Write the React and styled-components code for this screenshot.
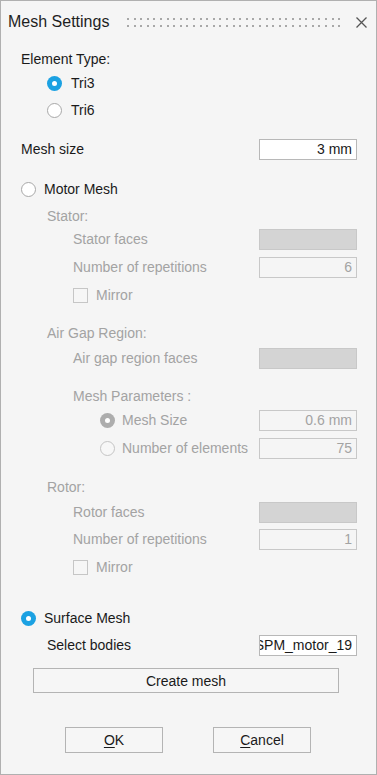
import React from "react";
import styled, { createGlobalStyle, css } from "styled-components";

const Global = createGlobalStyle`
  html, body { margin: 0; padding: 0; background: #f5f5f5; }
  body { font-family: "Liberation Sans", Arial, sans-serif; }
  * { box-sizing: border-box; }
`;

const Window = styled.div`
  width: 377px;
  height: 775px;
  border: 1px solid #b0b0b0;
  background: #f5f5f5;
  display: flex;
  flex-direction: column;
  font-size: 14px;
  color: #1a1a1a;
`;

const TitleBar = styled.div`
  height: 42px;
  display: flex;
  align-items: center;
  padding: 0 7px 0 7px;
`;

const Title = styled.div`
  font-size: 16px;
  color: #1e1e1e;
  white-space: nowrap;
`;

const Grip = styled.svg`
  margin-left: 18px;
  flex: none;
`;

const Close = styled.svg`
  margin-left: auto;
  margin-right: 1px;
  flex: none;
`;

const Body = styled.div`
  display: flex;
  flex-direction: column;
  padding: 0 19px 0 20px;
`;

const Row = styled.div`
  height: 22px;
  display: flex;
  align-items: center;
  margin-top: ${(p) => p.$mt || 0}px;
  padding-left: ${(p) => p.$indent || 0}px;
  color: ${(p) => (p.$disabled ? "#a3a3a3" : "#1a1a1a")};
`;

const Label = styled.span`
  flex: 1;
  white-space: nowrap;
`;

const RadioCircle = styled.span`
  width: 15px;
  height: 15px;
  border-radius: 50%;
  flex: none;
  margin-right: ${(p) => p.$gap ?? 8}px;
  display: flex;
  align-items: center;
  justify-content: center;
  ${(p) =>
    p.$checked
      ? css`
          background: ${p.$disabled ? "#adadad" : "#1ba1e2"};
          &::after {
            content: "";
            width: 5px;
            height: 5px;
            border-radius: 50%;
            background: #fff;
          }
        `
      : css`
          background: ${p.$disabled ? "#f7f7f7" : "#fff"};
          border: 1px solid ${p.$disabled ? "#c4c4c4" : "#a8a8a8"};
        `}
`;

const Check = styled.span`
  width: 15px;
  height: 15px;
  flex: none;
  margin-right: 8px;
  border: 1px solid #c6c6c6;
  background: #f6f6f6;
`;

const Field = styled.div`
  width: 98px;
  height: ${(p) => p.$h || 21}px;
  flex: none;
  border: 1px solid ${(p) => (p.$variant === "active" ? "#b8b8b8" : "#c8c8c8")};
  background: ${(p) =>
    p.$variant === "active" ? "#ffffff" : p.$variant === "filled" ? "#d4d4d4" : "#f5f5f5"};
  color: ${(p) => (p.$variant === "active" ? "#1a1a1a" : "#a3a3a3")};
  display: flex;
  align-items: center;
  justify-content: flex-end;
  padding-right: 4px;
  overflow: hidden;
  white-space: nowrap;
  font-size: 14px;
`;

const Button = styled.button`
  font-family: "Liberation Sans", Arial, sans-serif;
  font-size: 14px;
  color: #1a1a1a;
  background: #f6f6f6;
  border: 1px solid #b4b4b4;
  border-radius: 0;
  padding: 0;
  height: ${(p) => p.$h || 25}px;
  width: ${(p) => p.$w}px;
  display: flex;
  align-items: center;
  justify-content: center;
`;

const CreateRow = styled.div`
  margin-top: 12px;
  padding-left: 12px;
  display: flex;
`;

const Footer = styled.div`
  margin-top: 34px;
  display: flex;
  gap: 50px;
  padding-left: 44px;
`;

const Key = styled.span`
  text-decoration: underline;
  text-underline-offset: 2px;
`;

function Radio({ checked, disabled, label, indent, mt, gap }) {
  return (
    <Row $indent={indent} $mt={mt} $disabled={disabled}>
      <RadioCircle $checked={checked} $disabled={disabled} $gap={gap} />
      <Label>{label}</Label>
    </Row>
  );
}

function FieldRow({ label, indent, mt, variant, value, disabled, radio, radioChecked }) {
  return (
    <Row $indent={indent} $mt={mt} $disabled={disabled}>
      {radio && <RadioCircle $checked={radioChecked} $disabled $gap={7} />}
      <Label>{label}</Label>
      <Field $variant={variant}>{value}</Field>
    </Row>
  );
}

function GripDots() {
  const dots = [];
  for (let i = 0; i < 33; i++) {
    const x = Math.round(i * 6.6);
    dots.push(<rect key={"a" + i} x={x} y={0} width={2} height={2} fill="#a8a8a8" />);
    dots.push(<rect key={"b" + i} x={x} y={7} width={2} height={2} fill="#a8a8a8" />);
  }
  return (
    <Grip width="214" height="9" viewBox="0 0 214 9">
      {dots}
    </Grip>
  );
}

export default function App() {
  return (
    <>
      <Global />
      <Window>
        <TitleBar>
          <Title>Mesh Settings</Title>
          <GripDots />
          <Close width="13" height="13" viewBox="0 0 13 13">
            <path d="M1.5 1.5 L11.5 11.5 M11.5 1.5 L1.5 11.5" stroke="#555" strokeWidth="1.3" fill="none" />
          </Close>
        </TitleBar>
        <Body>
          <Row $mt={5}>
            <Label>Element Type:</Label>
          </Row>
          <Radio checked label="Tri3" indent={26} mt={2} gap={9} />
          <Radio label="Tri6" indent={26} mt={5} gap={9} />

          <FieldRow label="Mesh size" mt={17} variant="active" value="3 mm" />

          <Radio label="Motor Mesh" mt={18} />
          <Row $indent={26} $mt={5} $disabled>
            <Label>Stator:</Label>
          </Row>
          <FieldRow label="Stator faces" indent={52} mt={1} variant="filled" disabled />
          <FieldRow label="Number of repetitions" indent={52} mt={6} variant="disabled" value="6" disabled />
          <Row $indent={52} $mt={6} $disabled>
            <Check />
            <Label>Mirror</Label>
          </Row>

          <Row $indent={26} $mt={16} $disabled>
            <Label>Air Gap Region:</Label>
          </Row>
          <FieldRow label="Air gap region faces" indent={52} mt={3} variant="filled" disabled />
          <Row $indent={52} $mt={16} $disabled>
            <Label>Mesh Parameters :</Label>
          </Row>
          <FieldRow label="Mesh Size" indent={79} mt={2} variant="disabled" value="0.6 mm" disabled radio radioChecked />
          <FieldRow label="Number of elements" indent={79} mt={6} variant="disabled" value="75" disabled radio />

          <Row $indent={26} $mt={17} $disabled>
            <Label>Rotor:</Label>
          </Row>
          <FieldRow label="Rotor faces" indent={52} mt={3} variant="filled" disabled />
          <FieldRow label="Number of repetitions" indent={52} mt={5} variant="disabled" value="1" disabled />
          <Row $indent={52} $mt={6} $disabled>
            <Check />
            <Label>Mirror</Label>
          </Row>

          <Radio checked label="Surface Mesh" mt={29} />
          <FieldRow label="Select bodies" indent={26} mt={5} variant="active" value="SPM_motor_19" />

          <CreateRow>
            <Button $w={306}>Create mesh</Button>
          </CreateRow>

          <Footer>
            <Button $w={98} $h={26}>
              <Key>O</Key>K
            </Button>
            <Button $w={98} $h={26}>
              <Key>C</Key>ancel
            </Button>
          </Footer>
        </Body>
      </Window>
    </>
  );
}
